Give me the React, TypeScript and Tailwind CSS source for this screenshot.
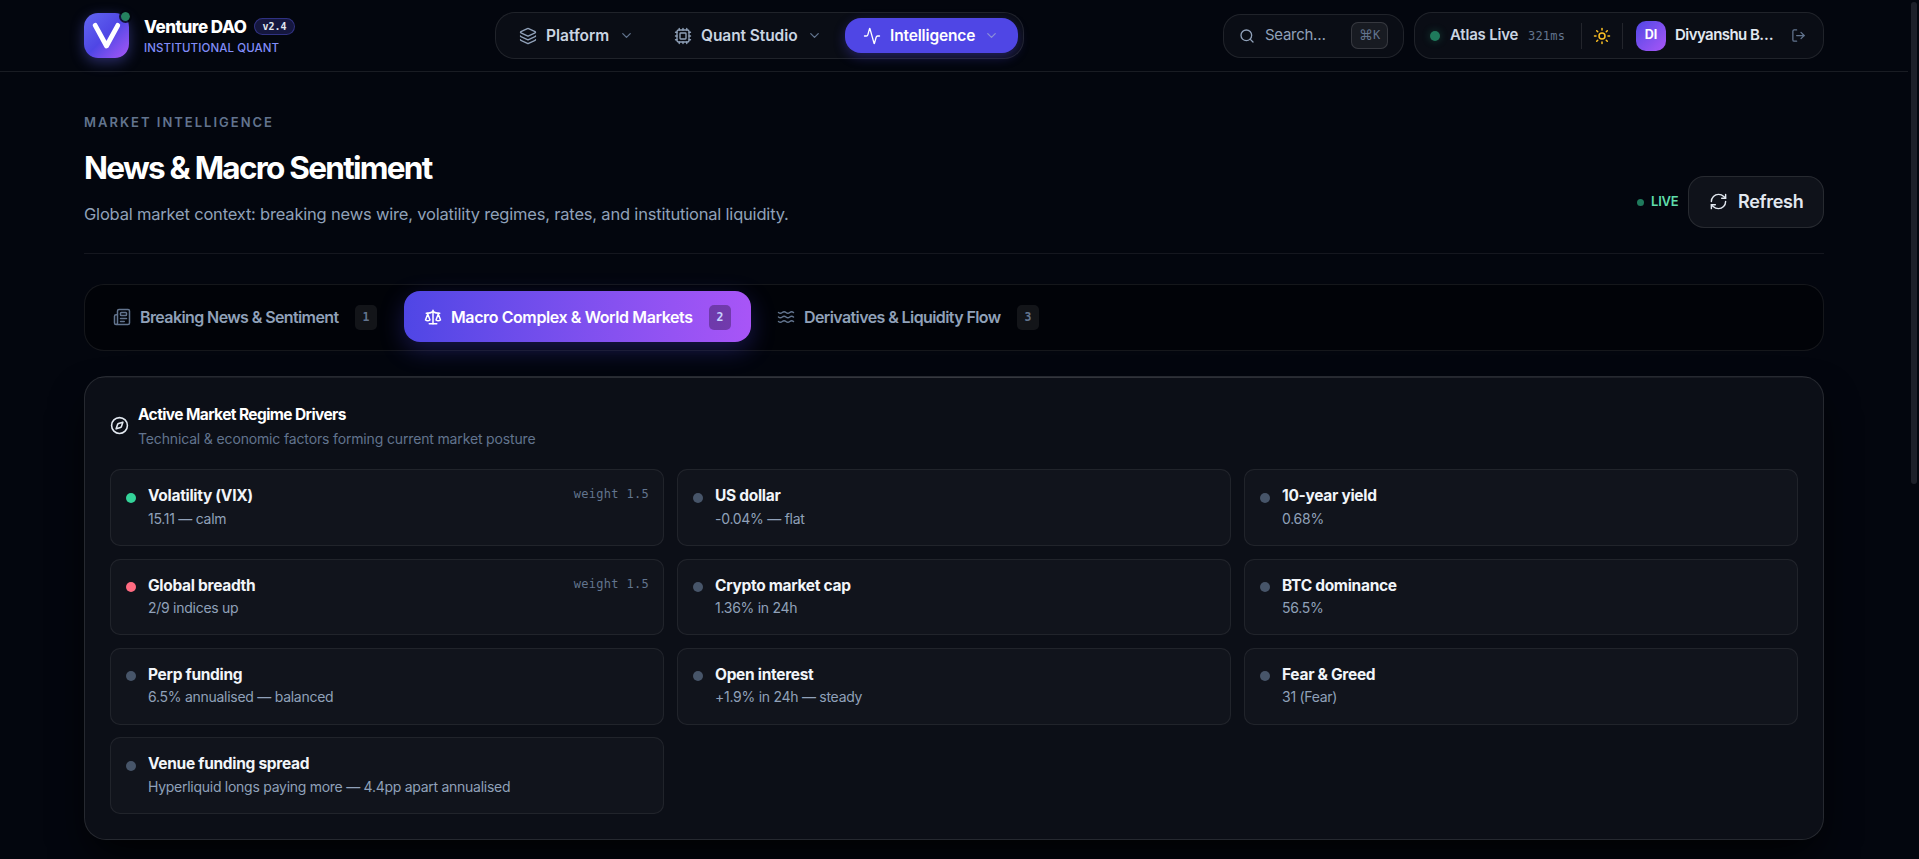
import { memo } from 'react';
import type { ReactNode } from 'react';
import clsx from 'clsx';
import {
  Activity,
  ChevronDown,
  Compass,
  Cpu,
  Layers,
  LogOut,
  Newspaper,
  RefreshCw,
  Scale,
  Search,
  Sun,
  Waves,
} from 'lucide-react';

type Tone = 'positive' | 'negative' | 'neutral';

interface Driver {
  label: string;
  detail: string;
  tone: Tone;
  weight?: string;
}

const DRIVERS: Driver[] = [
  { label: 'Volatility (VIX)', detail: '15.11 — calm', tone: 'positive', weight: '1.5' },
  { label: 'US dollar', detail: '-0.04% — flat', tone: 'neutral' },
  { label: '10-year yield', detail: '0.68%', tone: 'neutral' },
  { label: 'Global breadth', detail: '2/9 indices up', tone: 'negative', weight: '1.5' },
  { label: 'Crypto market cap', detail: '1.36% in 24h', tone: 'neutral' },
  { label: 'BTC dominance', detail: '56.5%', tone: 'neutral' },
  { label: 'Perp funding', detail: '6.5% annualised — balanced', tone: 'neutral' },
  { label: 'Open interest', detail: '+1.9% in 24h — steady', tone: 'neutral' },
  { label: 'Fear & Greed', detail: '31 (Fear)', tone: 'neutral' },
  {
    label: 'Venue funding spread',
    detail: 'Hyperliquid longs paying more — 4.4pp apart annualised',
    tone: 'neutral',
  },
];

const TONE_CLASS: Record<Tone, string> = {
  positive: 'bg-[#34d399]',
  negative: 'bg-[#ff6b81]',
  neutral: 'bg-[#475569]',
};

function Logo() {
  return (
    <div className="relative mr-[15px] h-[45px] w-[45px] shrink-0">
      <div className="flex h-full w-full items-center justify-center rounded-[14px] bg-linear-135 from-[#6366f1] via-[#4f46e5] to-[#a855f7] shadow-[0_4px_14px_rgba(99,102,241,0.4)]">
        <svg viewBox="0 0 45 45" className="h-full w-full" fill="none" stroke="white" strokeWidth="4.8" strokeLinecap="round" strokeLinejoin="round">
          <polyline points="11.2,12.3 22.5,33 33.8,12.3" />
        </svg>
      </div>
      <span className="absolute -top-[3px] -right-[3px] h-[13px] w-[13px] rounded-full border-2 border-[#03060e]/80 bg-[#25825f] bg-clip-padding" />
    </div>
  );
}

interface NavItemProps {
  icon: ReactNode;
  label: ReactNode;
  active?: boolean;
  className: string;
}

function NavItem({ icon, label, active, className }: NavItemProps) {
  return (
    <button
      className={clsx(
        'flex h-[35px] items-center rounded-[16px] pl-[18px] text-[15.5px] font-semibold whitespace-nowrap',
        active ? 'bg-[#4f46e5] text-white shadow-[0_4px_12px_rgba(79,70,229,0.35)]' : 'text-slate-300',
        className,
      )}
    >
      {icon}
      {label}
      <ChevronDown className={clsx('ml-auto h-[15px] w-[15px]', active ? 'text-[#8a8fd8]' : 'text-slate-500')} />
    </button>
  );
}

function Header() {
  return (
    <header className="flex h-[72px] w-[1908px] items-center border-b border-white/9 px-[84px]">
      <Logo />
      <div className="w-[351px] pt-[1px]">
        <div className="flex h-[20px] items-center">
          <span className="w-[110px] pt-[2px] text-[17px] font-extrabold tracking-[-0.5px] whitespace-nowrap text-white">Venture DAO</span>
          <span className="flex h-[17px] w-[41px] items-center justify-center rounded-full border border-indigo-500/35 bg-indigo-500/20 font-['DejaVu_Sans_Mono',monospace] text-[10px] font-bold text-slate-200">
            v2.4
          </span>
        </div>
        <div className="mt-[1px] h-[18px] text-[11.5px] leading-[20px] font-medium tracking-[0.1px] text-[#818cf8]">INSTITUTIONAL QUANT</div>
      </div>

      <nav className="flex h-[47px] w-[529px] items-center rounded-[20px] border border-white/9 bg-white/3 pl-[5px]">
        <NavItem
          className="w-[150px] pr-[17px]"
          icon={<Layers className="mr-[9px] h-[18px] w-[18px] text-slate-400" strokeWidth={1.8} />}
          label={<span>Platform</span>}
        />
        <NavItem
          className="ml-[5px] w-[183px] pr-[17px]"
          icon={<Cpu className="mr-[9px] h-[18px] w-[18px] text-slate-400" strokeWidth={1.8} />}
          label={<span className="tracking-[-0.08px]">Quant Studio</span>}
        />
        <NavItem
          active
          className="ml-[6px] w-[173px] pr-[19px]"
          icon={<Activity className="mr-[9px] h-[18px] w-[18px]" strokeWidth={1.8} />}
          label={<span className="tracking-[-0.15px]">Intelligence</span>}
        />
      </nav>

      <div className="ml-auto flex h-[44px] w-[181px] items-center rounded-[18px] border border-white/9 bg-white/3 pl-[15px]">
        <Search className="h-[16px] w-[16px] text-slate-400" strokeWidth={2} />
        <span className="ml-[10px] text-[15px] tracking-[-0.3px] text-slate-400">Search…</span>
        <kbd className="mr-[15px] ml-auto flex h-[27px] w-[37px] items-center justify-center rounded-[7px] border border-white/13 bg-white/6 pb-px font-['DejaVu_Sans_Mono','DejaVu_Sans',monospace] text-slate-500">
          <span className="font-['DejaVu_Sans',sans-serif] text-[14px] leading-none">⌘</span>
          <span className="text-[12px] leading-none">K</span>
        </kbd>
      </div>

      <div className="ml-[10px] flex h-[47px] w-[410px] items-center rounded-[18px] border border-white/9 bg-white/3 pl-[15px]">
        <span className="h-[10px] w-[10px] rounded-full bg-[#1f7a5c] shadow-[0_0_8px_rgba(52,211,153,0.25)]" />
        <span className="ml-[10px] w-[78px] text-[15px] font-semibold tracking-[-0.2px] text-slate-300">Atlas Live</span>
        <span className="w-[53px] font-['DejaVu_Sans_Mono',monospace] text-[12px] tracking-[0.2px] text-slate-500">321ms</span>
        <span className="h-[26px] w-px bg-white/10" />
        <Sun className="ml-[11px] h-[18px] w-[18px] text-[#fbbf24]" strokeWidth={2} />
        <span className="ml-[11px] h-[26px] w-px bg-white/10" />
        <span className="ml-[13px] flex h-[30px] w-[30px] items-center justify-center rounded-[10px] bg-linear-135 from-[#4f46e5] to-[#a855f7] text-[12.5px] font-bold text-white">
          DI
        </span>
        <span className="ml-[9px] w-[116px] text-[15px] font-semibold tracking-[-0.55px] text-slate-200">Divyanshu B…</span>
        <LogOut className="h-[15px] w-[15px] text-slate-500" />
      </div>
    </header>
  );
}

function PageTitle() {
  return (
    <section className="flex h-[182px] items-start justify-between border-b border-white/7">
      <div className="pt-[43px] text-slate-400">
        <p className="text-[13px] leading-[14px] font-semibold tracking-[2px] text-slate-500">MARKET INTELLIGENCE</p>
        <h1 className="mt-[19px] text-[31.5px] leading-[40px] font-bold tracking-[-1.73px] text-white">News &amp; Macro Sentiment</h1>
        <p className="mt-[14px] text-[16.5px] leading-[24px] tracking-[-0.195px] whitespace-nowrap">
          Global market context: breaking news wire, volatility regimes, rates, and institutional liquidity.
        </p>
      </div>
      <div className="flex items-center pt-[104px]">
        <span className="h-[7px] w-[7px] rounded-full bg-[#1f7a5c]" />
        <span className="ml-[7px] w-[37px] text-[13px] font-semibold tracking-[-0.2px] text-[#5fdcab]">LIVE</span>
        <button className="flex h-[52px] w-[136px] items-center rounded-[16px] border border-white/10 bg-white/5 pb-px pl-[20px] text-[18px] font-semibold tracking-[-0.3px] text-slate-200">
          <RefreshCw className="mr-[10px] h-[19px] w-[19px]" strokeWidth={1.8} />
          Refresh
        </button>
      </div>
    </section>
  );
}

interface TabProps {
  icon: ReactNode;
  label: ReactNode;
  badge: string;
  active?: boolean;
  className: string;
}

function Tab({ icon, label, badge, active, className }: TabProps) {
  return (
    <button
      className={clsx(
        'flex h-[51px] items-center rounded-[16px] text-[16px] font-semibold whitespace-nowrap',
        active
          ? 'bg-linear-to-r from-[#4f46e5] to-[#a855f7] text-white shadow-[0_8px_24px_rgba(79,70,229,0.3)]'
          : 'text-slate-400',
        className,
      )}
    >
      {icon}
      {label}
      <span
        className={clsx(
          "mt-px ml-auto flex h-[25px] w-[22px] items-center justify-center rounded-[5px] font-['DejaVu_Sans_Mono',monospace] text-[11.5px]",
          active ? 'bg-black/30 font-bold text-indigo-200' : 'bg-white/7 text-slate-500',
        )}
      >
        {badge}
      </span>
    </button>
  );
}

function TabBar() {
  return (
    <div className="mt-[30px] flex h-[67px] items-start rounded-[20px] border border-white/8 bg-black/40 pt-[6.4px] pl-[6px]">
      <Tab
        className="w-[309px] pr-[23px] pl-[22px]"
        badge="1"
        icon={<Newspaper className="mr-[9px] h-[18px] w-[18px] text-slate-500" />}
        label={<span className="tracking-[-0.6px]">Breaking News &amp; Sentiment</span>}
      />
      <Tab
        active
        className="ml-[4px] w-[347px] pr-[20px] pl-[20px]"
        badge="2"
        icon={<Scale className="mr-[9px] h-[18px] w-[18px]" />}
        label={<span className="tracking-[-0.4px]">Macro Complex &amp; World Markets</span>}
      />
      <Tab
        className="ml-[5px] w-[303px] pr-[20px] pl-[21px]"
        badge="3"
        icon={<Waves className="mr-[9px] h-[18px] w-[18px] text-slate-500" />}
        label={<span className="tracking-[-0.6px]">Derivatives &amp; Liquidity Flow</span>}
      />
    </div>
  );
}

const DriverCard = memo(function DriverCard({ label, detail, tone, weight }: Driver) {
  return (
    <div className="flex h-[76.6px] items-start rounded-[10px] border border-white/7 bg-white/[0.025] pr-[14px] pl-[15px]">
      <span className={clsx('mt-[22.3px] h-[10px] w-[10px] shrink-0 rounded-full', TONE_CLASS[tone])} />
      <div className="mt-[15px] ml-[12px] whitespace-nowrap">
        <div className="text-[15.5px] leading-[22px] font-bold tracking-[-0.3px] text-slate-100">{label}</div>
        <div className="mt-[0.5px] text-[14px] leading-[22px] tracking-[-0.27px] text-slate-400">{detail}</div>
      </div>
      {weight && (
        <span className="mt-[14px] ml-auto font-['DejaVu_Sans_Mono',monospace] text-[12px] leading-[20px] tracking-[0.3px] text-slate-500">
          weight {weight}
        </span>
      )}
    </div>
  );
});

function RegimeDrivers() {
  return (
    <section className="relative mt-[25px] h-[464px] rounded-[22px] border border-white/11 bg-[#0c0f17] px-[25px] shadow-[0_20px_40px_-8px_rgba(0,0,0,0.9)]">
      {/* top edge highlight */}
      <div className="absolute inset-x-[12px] top-0 h-px bg-linear-to-r from-white/4 via-white/18 to-white/4" />
      <div className="flex h-[92.4px] items-center pt-[6px]">
        <Compass className="-mt-[2px] mr-[9px] h-[19px] w-[19px] text-slate-200" />
        <div>
          <h2 className="pt-px text-[15.5px] leading-[22px] font-bold tracking-[-0.6px] text-white">Active Market Regime Drivers</h2>
          <p className="mt-[2px] text-[14px] leading-[22px] tracking-[-0.15px] text-slate-500">
            Technical &amp; economic factors forming current market posture
          </p>
        </div>
      </div>
      <div className="grid grid-cols-3 gap-x-[13px] gap-y-[12.7px]">
        {DRIVERS.map(driver => (
          <DriverCard key={driver.label} {...driver} />
        ))}
      </div>
    </section>
  );
}

export default function App() {
  return (
    <div className="flex h-[859px] w-[1919px] overflow-hidden bg-[#03060e] font-['Inter',sans-serif] text-white">
      <div className="w-[1908px]">
        <Header />
        <main className="px-[84px]">
          <PageTitle />
          <TabBar />
          <RegimeDrivers />
        </main>
      </div>
      {/* scrollbar thumb */}
      <div className="mt-[2px] ml-[3px] h-[482px] w-[6px] rounded-full bg-[#1d2029]" />
    </div>
  );
}
